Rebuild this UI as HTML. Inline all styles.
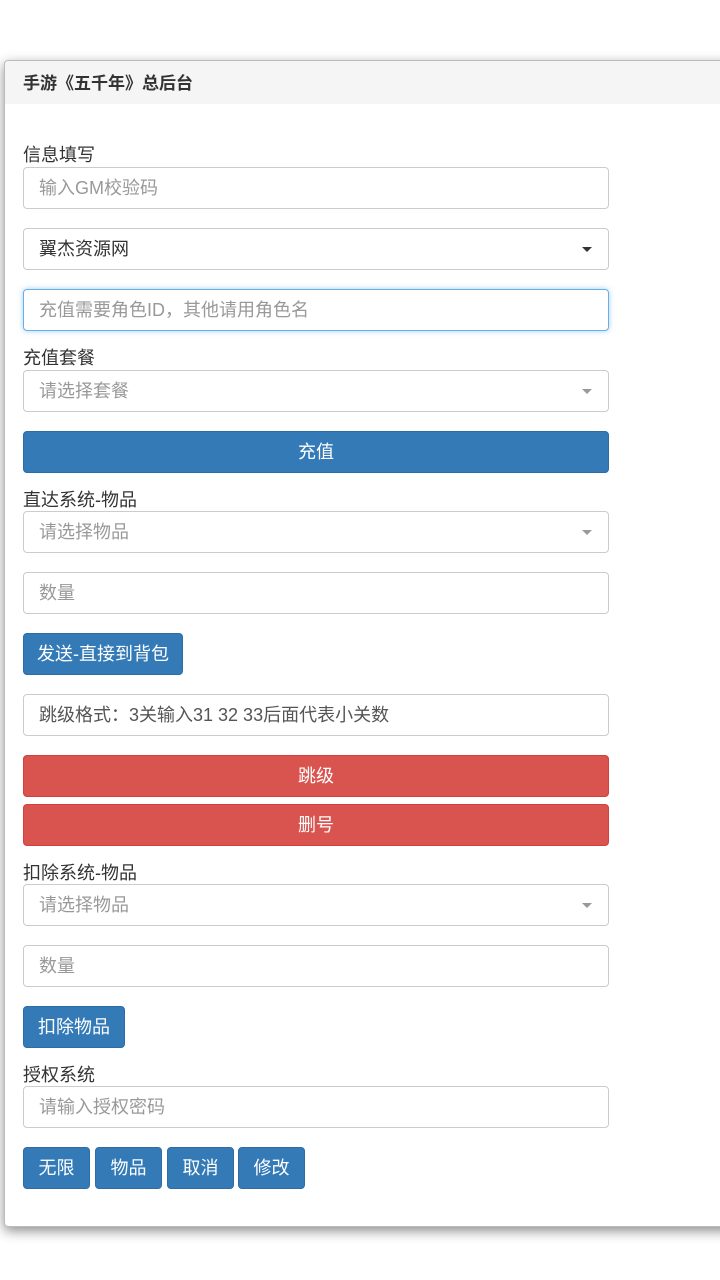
<!DOCTYPE html>
<html><head><meta charset="utf-8"><style>
*{box-sizing:border-box;margin:0;padding:0}
body{width:720px;height:1280px;background:#fff;font-family:"Liberation Sans","Noto Sans CJK SC",sans-serif;position:relative;overflow:hidden;color:#333}
.panel{position:absolute;left:4px;top:60px;width:730px;height:1167px;border:1px solid #bbb;border-radius:4px;box-shadow:0 4px 12px rgba(0,0,0,.45);background:#fff}
.hd{position:absolute;left:5px;top:61px;width:715px;height:43px;background:#f5f5f5;border-radius:4px 0 0 0;font-weight:bold;font-size:17px;line-height:45px;padding-left:18px;color:#333}
.lb{position:absolute;left:23px;font-size:18px;line-height:20px;color:#333}
.in{position:absolute;left:23px;width:586px;height:42px;border:1px solid #ccc;border-radius:4px;font-size:18px;line-height:40px;padding-left:15px;color:#999;background:#fff}
.in.v{color:#555}
.in.f{border-color:#66afe9;box-shadow:0 0 6px rgba(102,175,233,.6)}
.car{position:absolute;right:16px;top:18px;width:0;height:0;border-left:5px solid transparent;border-right:5px solid transparent;border-top:5px solid #999}
.car.d{border-top-color:#333}
.b{position:absolute;height:42px;border-radius:4px;background:#337ab7;border:1px solid #2e6da4;color:#fff;font-size:18px;line-height:40px;text-align:center}
.r{background:#d9534f;border-color:#d43f3a}
</style></head><body>
<div class="panel"></div>
<div class="hd">手游《五千年》总后台</div>
<div class="lb" style="top:145px">信息填写</div>
<div class="in" style="top:167px">输入GM校验码</div>
<div class="in v" style="top:228px;color:#333">翼杰资源网<span class="car d"></span></div>
<div class="in f" style="top:289px">充值需要角色ID，其他请用角色名</div>
<div class="lb" style="top:348px">充值套餐</div>
<div class="in" style="top:370px">请选择套餐<span class="car"></span></div>
<div class="b" style="top:431px;left:23px;width:586px">充值</div>
<div class="lb" style="top:490px">直达系统-物品</div>
<div class="in" style="top:511px">请选择物品<span class="car"></span></div>
<div class="in" style="top:572px">数量</div>
<div class="b" style="top:633px;left:23px;width:160px">发送-直接到背包</div>
<div class="in v" style="top:694px">跳级格式：3关输入31 32 33后面代表小关数</div>
<div class="b r" style="top:755px;left:23px;width:586px">跳级</div>
<div class="b r" style="top:804px;left:23px;width:586px">删号</div>
<div class="lb" style="top:863px">扣除系统-物品</div>
<div class="in" style="top:884px">请选择物品<span class="car"></span></div>
<div class="in" style="top:945px">数量</div>
<div class="b" style="top:1006px;left:23px;width:102px">扣除物品</div>
<div class="lb" style="top:1065px">授权系统</div>
<div class="in" style="top:1086px">请输入授权密码</div>
<div class="b" style="top:1147px;left:23px;width:67px">无限</div>
<div class="b" style="top:1147px;left:95px;width:67px">物品</div>
<div class="b" style="top:1147px;left:167px;width:67px">取消</div>
<div class="b" style="top:1147px;left:238px;width:67px">修改</div>
</body></html>
